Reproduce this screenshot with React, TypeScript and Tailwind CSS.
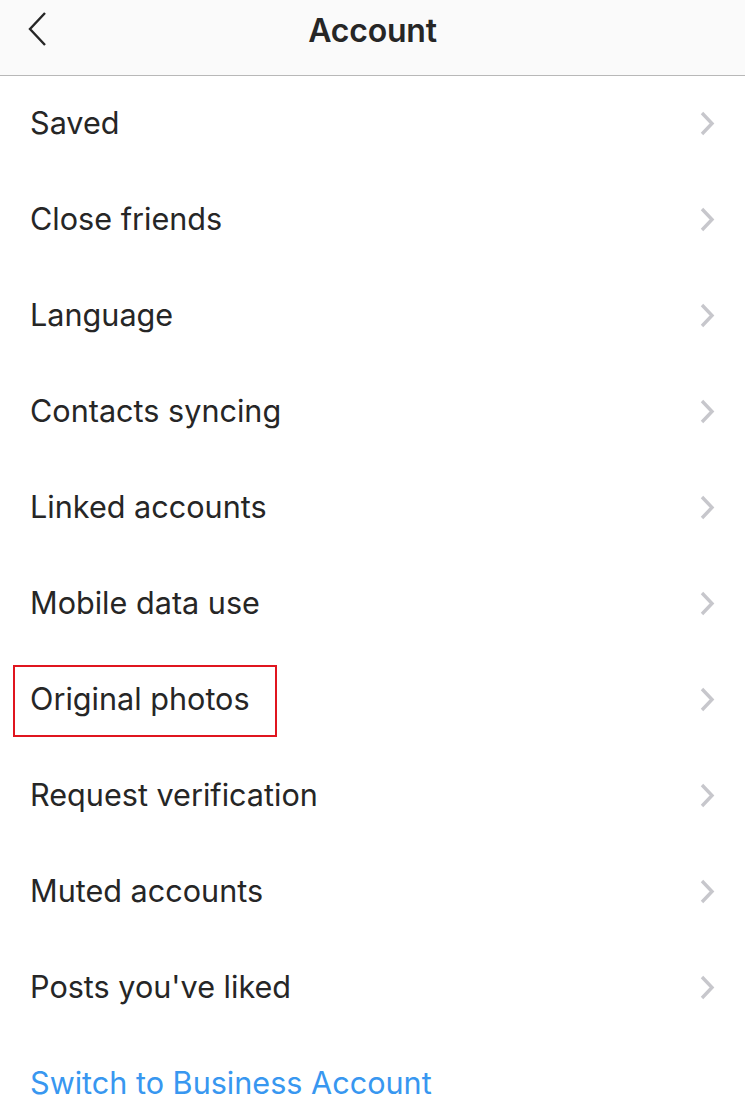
const items = [
  "Saved",
  "Close friends",
  "Language",
  "Contacts syncing",
  "Linked accounts",
  "Mobile data use",
  "Original photos",
  "Request verification",
  "Muted accounts",
  "Posts you've liked",
];

function Chevron() {
  return (
    <svg width="17" height="27" viewBox="0 0 17 27" className="shrink-0">
      <polyline points="3,3 13,13.5 3,24" fill="none" stroke="#c7c7cc" strokeWidth="3.4" strokeLinecap="butt" />
    </svg>
  );
}

export default function App() {
  return (
    <div className="w-[745px] h-[1111px] overflow-hidden bg-white text-[#262626]" style={{ fontFamily: "Inter, 'Noto Sans', sans-serif" }}>
      <header className="h-[76px] bg-[#fafafa] border-b border-[#b8b8b8]">
        <div className="relative h-[62px] flex items-center justify-center">
          <svg width="24" height="36" viewBox="0 0 24 36" className="absolute left-[25px] top-[11px]">
            <polyline points="20,2 5,18 20,34" fill="none" stroke="#262626" strokeWidth="2.4" />
          </svg>
          <h1 className="text-[32px] font-semibold tracking-[-0.2px]">Account</h1>
        </div>
      </header>
      <ul>
        {items.map((label) => (
          <li key={label} className="h-[96px] flex items-center justify-between pl-[30px] pr-[29px] pb-[2px]">
            <span className="relative text-[30.6px] leading-none">
              {label}
              {label === "Original photos" && (
                <span className="absolute -left-[17px] -right-[27px] -top-[19px] -bottom-[23px] border-2 border-[#e0151f]" />
              )}
            </span>
            <Chevron />
          </li>
        ))}
        <li className="h-[96px] flex items-center pl-[30px] pb-[2px]">
          <span className="text-[30.6px] leading-none text-[#3897f0]">Switch to Business Account</span>
        </li>
      </ul>
    </div>
  );
}
